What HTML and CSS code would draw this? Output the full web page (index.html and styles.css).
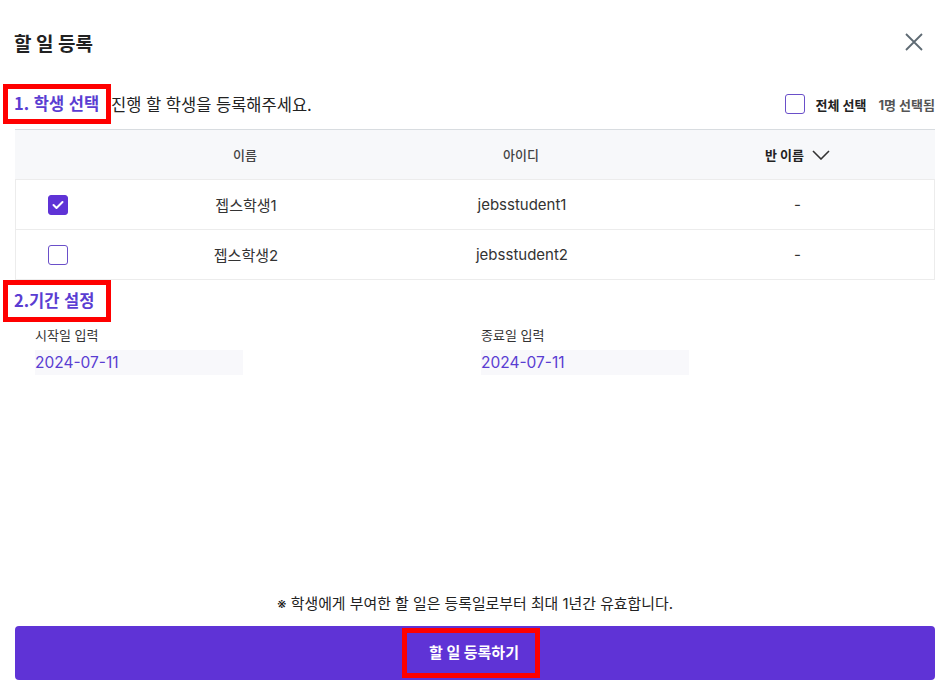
FILE: index.html
```html
<!DOCTYPE html>
<html lang="ko">
<head>
<meta charset="UTF-8">
<meta name="viewport" content="width=device-width, initial-scale=1.0">
<title>할 일 등록</title>
<link rel="stylesheet" href="styles.css">
</head>
<body>

<div class="modal">
  <header class="modal-head">
    <h1>할 일 등록</h1>
    <button class="close" aria-label="닫기">
      <svg width="18" height="18" viewBox="0 0 18 18"><path d="M1 1L17 17M17 1L1 17" stroke="#5e6a73" stroke-width="1.8" fill="none"/></svg>
    </button>
  </header>

  <div class="step-row">
    <div class="step-left">
      <span class="step-title">1. 학생 선택</span>
      <span class="step-desc">진행 할 학생을 등록해주세요.</span>
    </div>
    <div class="step-right">
      <span class="check"></span>
      <span class="all-label">전체 선택</span>
      <span class="count">1명 선택됨</span>
    </div>
  </div>

  <div class="table">
    <div class="tr th">
      <div></div>
      <div>이름</div>
      <div>아이디</div>
      <div class="sort">반 이름
        <svg width="18" height="10" viewBox="0 0 18 10"><path d="M1 1L9 9L17 1" stroke="#333" stroke-width="1.6" fill="none"/></svg>
      </div>
    </div>
    <div class="tr">
      <div><span class="check on"><svg width="12" height="10" viewBox="0 0 12 10"><path d="M1.5 5L4.5 8L10.5 2" stroke="#fff" stroke-width="2" fill="none" stroke-linecap="round" stroke-linejoin="round"/></svg></span></div>
      <div>젭스학생1</div>
      <div>jebsstudent1</div>
      <div class="dash">-</div>
    </div>
    <div class="tr">
      <div><span class="check"></span></div>
      <div>젭스학생2</div>
      <div>jebsstudent2</div>
      <div class="dash">-</div>
    </div>
  </div>

  <div class="step-row small">
    <span class="step-title">2.기간 설정</span>
  </div>

  <div class="dates">
    <div class="field">
      <label>시작일 입력</label>
      <div class="date">2024-07-11</div>
    </div>
    <div class="field">
      <label>종료일 입력</label>
      <div class="date">2024-07-11</div>
    </div>
  </div>

  <div class="spacer"></div>

  <p class="note">※ 학생에게 부여한 할 일은 등록일로부터 최대 1년간 유효합니다.</p>
  <button class="submit"><span>할 일 등록하기</span></button>
</div>

</body>
</html>
```

FILE: styles.css
```css
* { margin: 0; padding: 0; box-sizing: border-box; }
body { font-family: "Inter", "Noto Sans CJK KR", "Noto Sans", sans-serif; background: #fff; color: #222; }

.modal { height: 693px; display: flex; flex-direction: column; padding: 0 10px 13px 15px; }

.modal-head { height: 84px; display: flex; align-items: center; justify-content: space-between; }
.modal-head h1 { font-size: 19px; font-weight: 700; color: #222; margin-left: -1px; }
.close { border: none; background: none; width: 18px; height: 18px; margin-right: 12px; display: flex; }

.step-row { height: 40px; display: flex; align-items: center; justify-content: space-between; }
.step-left { display: flex; align-items: center; margin-left: -12px; }
.step-title { border: 5px solid #f00; padding: 0 0 0 6px; width: 108px; flex: none; height: 40px; line-height: 29px; font-family: "Noto Sans CJK KR", sans-serif; font-size: 16.5px; font-weight: 700; color: #5a3dd2; }
.step-desc { font-size: 16.5px; color: #222; }
.step-row.small { height: 42px; justify-content: flex-start; }
.step-row.small .step-title { margin-left: -12px; height: 42px; line-height: 31px; }

.step-right { display: flex; align-items: center; }
.all-label { font-size: 13px; font-weight: 700; margin-left: 11px; color: #222; }
.count { font-size: 13px; font-weight: 700; color: #555; margin-left: 12px; }

.check { width: 20px; height: 20px; border: 1.5px solid #6a4fc9; border-radius: 3px; display: inline-flex; align-items: center; justify-content: center; background: #fff; }
.check.on { background: #5f33d6; border-color: #5f33d6; }

.table { margin-top: 5px; }
.tr { display: grid; grid-template-columns: 85px 290px 262px 1fr; height: 50px; border: 1px solid #ececec; border-top: none; align-items: center; text-align: center; font-size: 15px; color: #333; }
.tr > div:first-child { display: flex; padding-left: 32px; }
.tr .dash { padding-left: 8px; }
.th { height: 51px; background: #f7f8fa; border: none; border-top: 1px solid #d8dce0; border-bottom: 1px solid #ececec; font-size: 13px; font-weight: 500; color: #444; }
.th .sort { font-weight: 700; color: #222; display: flex; align-items: center; justify-content: center; gap: 8px; padding-left: 8px; }

.dates { display: grid; grid-template-columns: 446px 1fr; padding-left: 20px; margin-top: 4px; }
.field label { display: block; font-size: 13px; color: #333; line-height: 18px; }
.date { margin-top: 6px; width: 208px; height: 25px; background: #f8f8fb; color: #5a3dd2; font-size: 15.5px; line-height: 25px; }

.spacer { flex: 1; }

.note { text-align: center; font-size: 14.9px; color: #222; margin-bottom: 13px; }
.submit { height: 54px; border: none; border-radius: 4px; background: #5f33d6; display: flex; align-items: center; justify-content: center; font-family: inherit; }
.submit span { border: 5px solid #f00; padding: 0 16px 0 22px; margin-right: 8px; height: 50px; line-height: 39px; color: #fff; font-size: 15px; font-weight: 700; }
```
